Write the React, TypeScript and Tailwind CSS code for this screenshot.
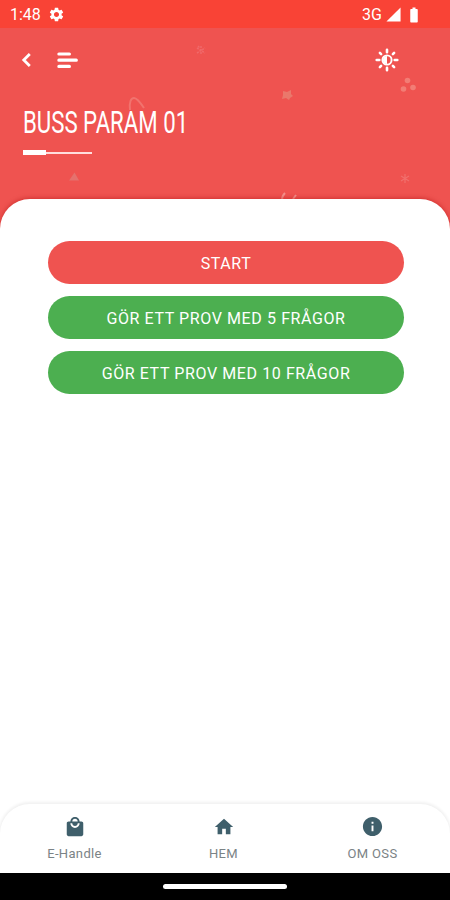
import type { ReactNode } from 'react';
import { MdBatteryFull, MdHome, MdInfo, MdLocalMall, MdSettings, MdSignalCellular4Bar } from 'react-icons/md';

const actions = [
  { label: 'START', color: 'bg-[#ef5350]' },
  { label: 'GÖR ETT PROV MED 5 FRÅGOR', color: 'bg-[#4caf50]' },
  { label: 'GÖR ETT PROV MED 10 FRÅGOR', color: 'bg-[#4caf50]' },
];

function StatusBar() {
  return (
    <div className="flex h-7 shrink-0 items-center justify-between bg-[#f94336] pl-[10px] pr-[27px] pt-px text-white">
      <div className="flex items-center gap-[7px]">
        <span className="text-[16px] leading-none">1:48</span>
        <MdSettings size={17} />
      </div>
      <div className="flex items-center">
        <span className="text-[16px] leading-none">3G</span>
        <MdSignalCellular4Bar size={17} className="ml-[3px]" />
        <MdBatteryFull size={18} className="ml-[3px]" />
      </div>
    </div>
  );
}

// Faint confetti behind the header
function HeaderPattern() {
  return (
    <svg className="pointer-events-none absolute inset-0" width="450" height="202" viewBox="0 28 450 202" fill="none">
      <g fill="#f27d75">
        <circle cx="407.5" cy="80.5" r="2.8" />
        <circle cx="403.5" cy="89" r="2.8" />
        <circle cx="413" cy="87.5" r="2.8" />
      </g>
      <path d="M283 91l4 1 4-2v4l2 2-3 2-1 2-3-2-4 1 1-4z" fill="#ea786b" />
      <path d="M69 180.5L74.5 172.5L79 180.5Z" fill="#e5716d" />
      <path d="M130 110c-1-8 1-12 4-12s6 4 10 10" stroke="#f1736e" strokeWidth="2" />
      <path d="M282 200c0-3 1-5 3-7M293 199l3-4" stroke="#f4918c" strokeWidth="2" />
      <g stroke="#f0696a" strokeWidth="1.5">
        <path d="M201 46v9M197 48l8 5M197 53l8-5M198 46l2 2" strokeDasharray="2 1" />
        <path d="M405 174v9M401 176l8 5M401 181l8-5" stroke="#f16f6c" strokeWidth="1.2" />
      </g>
    </svg>
  );
}

function BrightnessIcon() {
  return (
    <svg width="24" height="24" viewBox="0 0 24 24" fill="none" stroke="white">
      <path d="M12 1.7v2.6M12 19.7v2.6M1.7 12h2.6M19.7 12h2.6M4.9 4.9l1.2 1.2M17.9 17.900l1.200 1.200M4.900 19.100l1.200-1.200M17.900 6.100l1.200-1.200" strokeWidth="2.600" strokeLinecap="round" />
      <circle cx="12" cy="12" r="4.600" strokeWidth="1.900" />
      <path d="M12 8a4 4 0 0 0 0 8z" fill="white" stroke="none" />
    </svg>
  );
}

function Header() {
  return (
    <header className="relative h-[171px] shrink-0 bg-[#ef5350] text-white">
      <HeaderPattern />
      <div className="relative flex h-[64px] items-center pl-[21px] pr-[51px]">
        <svg width="10" height="16" viewBox="0 0 10 16" fill="none" stroke="white" strokeWidth="2.8">
          <path d="M8.8 2L2.8 8l6 6" />
        </svg>
        <svg className="ml-[26px]" width="22" height="18" viewBox="0 0 22 18" stroke="white" strokeWidth="3.2" strokeLinecap="round">
          <path d="M1.9 3h10.5M1.9 9.2h17.4M1.9 15.4h10.5" />
        </svg>
        <div className="ml-auto">
          <BrightnessIcon />
        </div>
      </div>
      <div className="relative pl-[23px]">
        <h1 className="origin-left scale-x-[0.694] whitespace-nowrap pt-[11px] text-[32px] font-normal leading-[38px]">BUSS PARAM 01</h1>
        <div className="mt-[9px] flex items-center">
          <span className="h-[5px] w-[23px] bg-white" />
          <span className="h-[2px] w-[46px] bg-[#ffdedd]" />
        </div>
      </div>
    </header>
  );
}

function NavItem({ icon, label }: { icon: ReactNode; label: string }) {
  return (
    <button className="flex w-[149px] flex-col items-center pt-[11px] text-[#3f5f6b]">
      <span className="flex h-[23px] items-center">{icon}</span>
      <span className="mt-[8px] text-[13px] leading-4 tracking-[0.35px] text-[#7b8386]">{label}</span>
    </button>
  );
}

export default function App() {
  return (
    <div className="flex h-[900px] w-[450px] flex-col overflow-hidden bg-white" style={{ fontFamily: 'Roboto, sans-serif' }}>
      <StatusBar />
      <Header />
      <div className="flex flex-1 flex-col bg-[linear-gradient(#ef5350_32px,white_32px)]">
        <main className="relative flex flex-1 flex-col gap-3 rounded-t-[30px] bg-white pl-12 pr-[46px] pt-[42px] shadow-[0_-1px_4px_rgba(180,20,20,0.5)] [clip-path:inset(-8px_0_0_0)]">
          {actions.map((a) => (
            <button key={a.label} className={`h-[43px] shrink-0 rounded-full pt-[2px] text-[16px] tracking-[0.6px] text-white ${a.color}`}>
              {a.label}
            </button>
          ))}
        </main>
        <nav className="relative flex h-[69px] shrink-0 rounded-t-[30px] bg-white shadow-[0_-1px_3px_1px_rgba(0,0,0,0.06)]">
          <NavItem icon={<MdLocalMall size={22} />} label="E-Handle" />
          <NavItem icon={<MdHome size={22} />} label="HEM" />
          <NavItem icon={<MdInfo size={23} />} label="OM OSS" />
        </nav>
      </div>
      <div className="relative flex h-[27px] shrink-0 items-center justify-center bg-black">
        <div className="h-[5px] w-[124px] rounded-full bg-white" />
      </div>
    </div>
  );
}
